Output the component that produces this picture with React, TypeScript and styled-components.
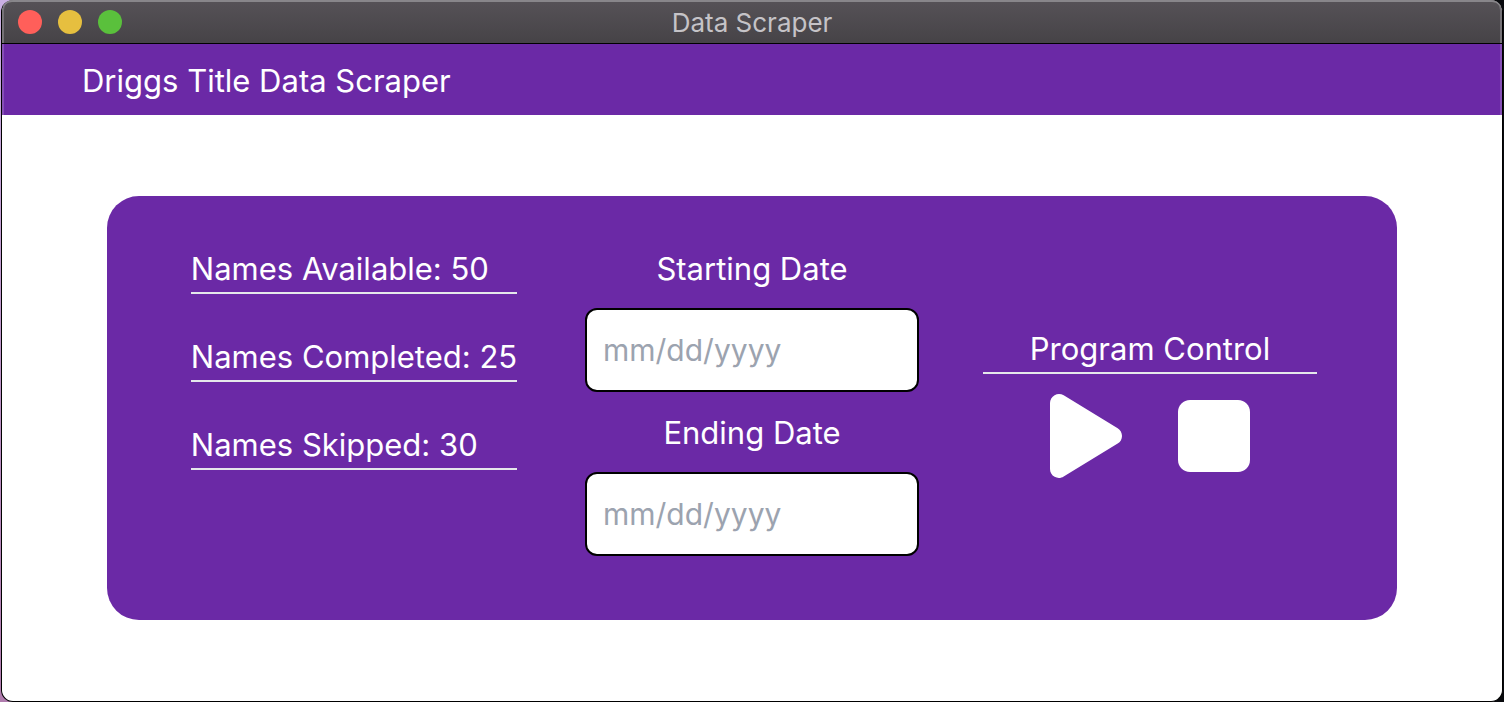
import React from "react";
import styled, { createGlobalStyle } from "styled-components";

const purple = "#6b29a6";

const GlobalStyle = createGlobalStyle`
  *, *::before, *::after { box-sizing: border-box; }
  html, body { margin: 0; padding: 0; }
  body {
    font-family: Inter, "Liberation Sans", sans-serif;
    font-size: 31px;
    line-height: 46px;
    color: #ffffff;
    background: #08090d;
  }
`;

const Desktop = styled.div`
  min-height: 100vh;
  display: flex;
  padding: 0 1px 1px;
  background:
    linear-gradient(#cbb0e4, #b07cae) left / 12px 100% no-repeat,
    linear-gradient(90deg, #a878a8, #5a3f62) left bottom / 230px 1px no-repeat,
    #08090d;
`;

const Window = styled.div`
  position: relative;
  flex: 1;
  display: flex;
  flex-direction: column;
  border: 1px solid #000000;
  border-top: 0;
  border-radius: 12px;
  overflow: hidden;
  background: #ffffff;
`;

const TitleBar = styled.header`
  position: relative;
  display: flex;
  align-items: center;
  height: 44px;
  padding: 0 16px;
  border-bottom: 1px solid #000000;
  border-radius: 10px 10px 0 0;
  background: linear-gradient(#565257, #464347);
  box-shadow: inset 0 2px 0 #88868a, inset 2px 0 0 #757277, inset -2px 0 0 #757277;
`;

const Lights = styled.div`
  display: flex;
  flex: 1;
  gap: 16px;
`;

const Light = styled.button<{ $color: string }>`
  width: 24px;
  height: 24px;
  padding: 0;
  border: 0;
  border-radius: 50%;
  background: ${(p) => p.$color};
`;

const WindowTitle = styled.div`
  padding-top: 2px;
  font-size: 26px;
  line-height: 40px;
  color: #c5c3c7;
`;

const Spacer = styled.div`
  flex: 1;
`;

const AppBar = styled.div`
  padding: 14px 80px 11px;
  background: ${purple};
  box-shadow: inset 2px 0 0 #8650b6, inset -2px 0 0 #8650b6;
`;

const AppTitle = styled.h1`
  margin: 0;
  font-size: 31px;
  font-weight: 400;
`;

const Panel = styled.main`
  display: grid;
  grid-template-columns: repeat(3, minmax(0, 1fr));
  gap: 64px;
  width: 86%;
  margin: 81px auto;
  padding: 48px 80px 56px;
  border-radius: 32px;
  background: ${purple};
`;

const Stats = styled.div`
  display: flex;
  flex-direction: column;
  gap: 38px;
  justify-self: center;
`;

const Stat = styled.div`
  padding-top: 2px;
  border-bottom: 2px solid #e5e7eb;
  white-space: nowrap;
`;

const Dates = styled.form`
  display: flex;
  flex-direction: column;
  gap: 16px;
  padding-bottom: 8px;
`;

const Field = styled.div`
  display: flex;
  flex-direction: column;
  gap: 16px;
`;

const Label = styled.label`
  padding-top: 2px;
  text-align: center;
`;

const DateInput = styled.input`
  width: 100%;
  height: 84px;
  padding: 0 16px;
  border: 2px solid #000000;
  border-radius: 12px;
  background: #ffffff;
  color: #111827;
  font: inherit;
  font-size: 30px;
  &::placeholder { color: #9ca3af; opacity: 1; }
`;

const Controls = styled.section`
  display: flex;
  flex-direction: column;
  justify-content: center;
  gap: 14px;
`;

const ControlsTitle = styled.h2`
  margin: 0;
  padding-top: 2px;
  border-bottom: 2px solid #e5e7eb;
  font-size: 31px;
  font-weight: 400;
  text-align: center;
`;

const ControlRow = styled.div`
  display: flex;
  justify-content: center;
  gap: 56px;
`;

const ControlButton = styled.button`
  display: flex;
  padding: 0;
  border: 0;
  background: none;
  color: #ffffff;
  cursor: pointer;
  svg { width: 72px; height: 96px; fill: currentColor; }
`;

const stats = [
  { label: "Names Available", value: 50 },
  { label: "Names Completed", value: 25 },
  { label: "Names Skipped", value: 30 },
];

const fields = [
  { id: "start", label: "Starting Date" },
  { id: "end", label: "Ending Date" },
];

export default function App() {
  return (
    <>
      <GlobalStyle />
      <Desktop>
        <Window>
          <TitleBar>
            <Lights>
              <Light $color="#ff5f5a" aria-label="Close" />
              <Light $color="#e6bf3f" aria-label="Minimize" />
              <Light $color="#5ac03c" aria-label="Zoom" />
            </Lights>
            <WindowTitle>Data Scraper</WindowTitle>
            <Spacer />
          </TitleBar>
          <AppBar>
            <AppTitle>Driggs Title Data Scraper</AppTitle>
          </AppBar>
          <Panel>
            <Stats>
              {stats.map((s) => (
                <Stat key={s.label}>{`${s.label}: ${s.value}`}</Stat>
              ))}
            </Stats>
            <Dates>
              {fields.map((f) => (
                <Field key={f.id}>
                  <Label htmlFor={f.id}>{f.label}</Label>
                  <DateInput id={f.id} type="text" placeholder="mm/dd/yyyy" />
                </Field>
              ))}
            </Dates>
            <Controls>
              <ControlsTitle>Program Control</ControlsTitle>
              <ControlRow>
                <ControlButton aria-label="Start">
                  <svg viewBox="0 0 384 512" aria-hidden="true">
                    <path d="M361 215C375.3 223.8 384 239.3 384 256C384 272.7 375.3 288.2 361 296.1L73.03 472.1C58.21 482 39.66 482.4 24.52 473.9C9.377 465.4 0 449.4 0 432V80C0 62.64 9.377 46.63 24.52 38.13C39.66 29.64 58.21 29.99 73.03 39.04L361 215z" />
                  </svg>
                </ControlButton>
                <ControlButton aria-label="Stop">
                  <svg viewBox="0 0 384 512" aria-hidden="true">
                    <path d="M384 128v256c0 35.35-28.65 64-64 64H64c-35.35 0-64-28.65-64-64V128c0-35.35 28.65-64 64-64H320C355.3 64 384 92.65 384 128z" />
                  </svg>
                </ControlButton>
              </ControlRow>
            </Controls>
          </Panel>
        </Window>
      </Desktop>
    </>
  );
}
